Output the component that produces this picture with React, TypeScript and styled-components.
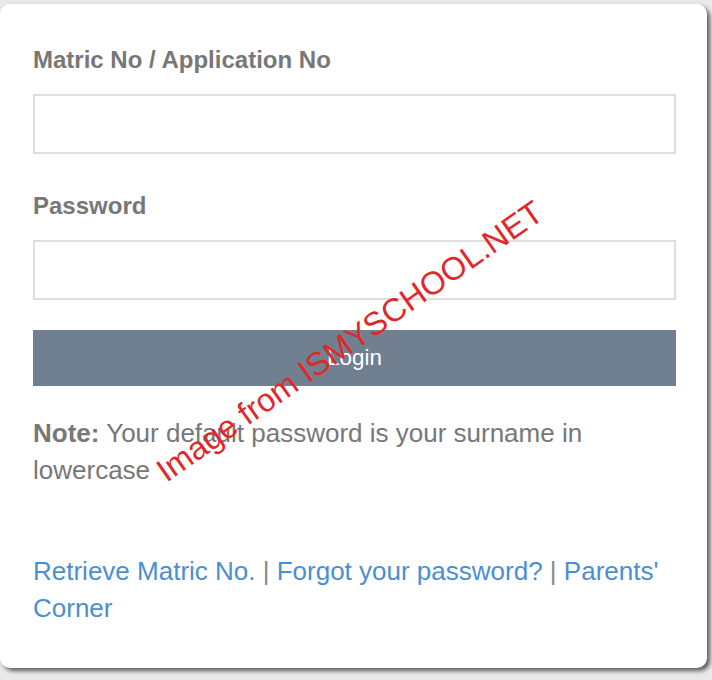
import React, { useState } from 'react';
import styled, { createGlobalStyle } from 'styled-components';

const GlobalStyle = createGlobalStyle`
  html, body {
    margin: 0;
    padding: 0;
    background: #e9e9e9;
    font-family: "Liberation Sans", Arial, sans-serif;
  }
  * {
    box-sizing: border-box;
  }
`;

const Page = styled.div`
  padding-top: 4px;
  width: 712px;
  height: 680px;
  overflow: hidden;
`;

const Card = styled.form`
  position: relative;
  width: 707px;
  height: 664px;
  background: #fff;
  border-radius: 10px;
  box-shadow: 3px 3px 4px rgba(0, 0, 0, 0.6);
  padding: 39px 31px 0 33px;
  display: flex;
  flex-direction: column;
`;

const Field = styled.div<{ $gap: number }>`
  display: flex;
  flex-direction: column;
  margin-bottom: ${p => p.$gap}px;
`;

const Label = styled.label`
  font-size: 24px;
  font-weight: bold;
  line-height: 34px;
  color: #777;
  margin-bottom: 17px;
`;

const Input = styled.input`
  width: 100%;
  height: 60px;
  border: 2px solid #dedede;
  background: #fff;
  font-size: 24px;
  padding: 0 12px;
  outline: none;
  font-family: inherit;
`;

const Button = styled.button`
  width: 100%;
  height: 56px;
  background: #708090;
  color: #fff;
  border: none;
  font-family: inherit;
  font-size: 22.4px;
  cursor: pointer;
  margin-bottom: 29px;
`;

const Note = styled.p`
  margin: 0 0 65px;
  font-size: 26px;
  line-height: 36.6px;
  color: #777;

  strong {
    font-weight: bold;
  }
`;

const Links = styled.p`
  margin: 0;
  font-size: 26px;
  line-height: 36.6px;
  color: #888;
`;

const Link = styled.a`
  color: #4a8fd1;
  text-decoration: none;
`;

const Watermark = styled.div`
  position: absolute;
  left: 163px;
  top: 474px;
  transform-origin: 0 0;
  transform: rotate(-35deg) translateY(-23px);
  color: #e0282a;
  font-size: 32.4px;
  white-space: nowrap;
  pointer-events: none;
`;

export default function App() {
  const [matric, setMatric] = useState('');
  const [password, setPassword] = useState('');

  return (
    <Page>
      <GlobalStyle />
      <Card onSubmit={e => e.preventDefault()}>
        <Field $gap={35}>
          <Label htmlFor="matric">Matric No / Application No</Label>
          <Input id="matric" value={matric} onChange={e => setMatric(e.target.value)} />
        </Field>
        <Field $gap={30}>
          <Label htmlFor="password">Password</Label>
          <Input
            id="password"
            type="password"
            value={password}
            onChange={e => setPassword(e.target.value)}
          />
        </Field>
        <Button type="submit">Login</Button>
        <Note>
          <strong>Note:</strong> Your default password is your surname in lowercase
        </Note>
        <Links>
          <Link href="#">Retrieve Matric No.</Link> | <Link href="#">Forgot your password?</Link> |{' '}
          <Link href="#">Parents' Corner</Link>
        </Links>
        <Watermark>Image from ISMYSCHOOL.NET</Watermark>
      </Card>
    </Page>
  );
}
